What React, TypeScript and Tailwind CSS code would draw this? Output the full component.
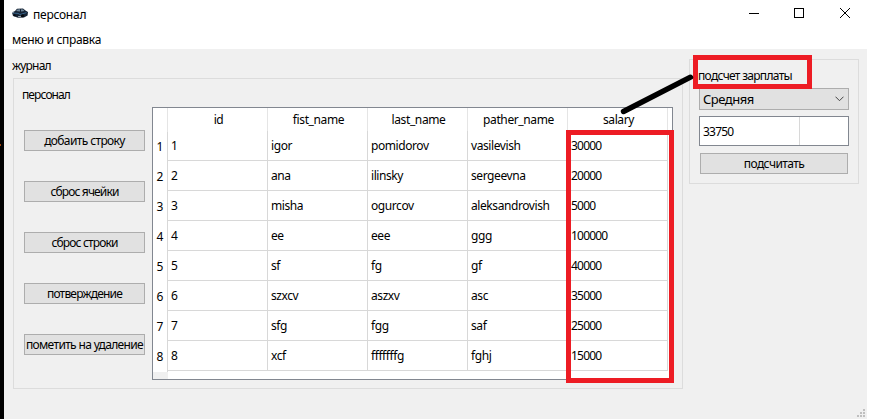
import React from "react";

const columns = ["id", "fist_name", "last_name", "pather_name", "salary"];

const rows = [
  ["1", "igor", "pomidorov", "vasilevish", "30000"],
  ["2", "ana", "ilinsky", "sergeevna", "20000"],
  ["3", "misha", "ogurcov", "aleksandrovish", "5000"],
  ["4", "ee", "eee", "ggg", "100000"],
  ["5", "sf", "fg", "gf", "40000"],
  ["6", "szxcv", "aszxv", "asc", "35000"],
  ["7", "sfg", "fgg", "saf", "25000"],
  ["8", "xcf", "fffffffg", "fghj", "15000"],
];

const actions = [
  { label: "добаить строку", tracking: "tracking-[-0.62px]" },
  { label: "сброс ячейки", tracking: "tracking-[-0.85px]" },
  { label: "сброс строки", tracking: "tracking-[-0.85px]" },
  { label: "потверждение", tracking: "tracking-[-0.8px]" },
  { label: "пометить на удаление", tracking: "tracking-[-0.65px]" },
];

function Button({ label, className }: { label: string; className: string }) {
  return (
    <button
      className={`flex h-[21px] items-center justify-center border border-[#adadad] bg-[#e1e1e1] pt-px whitespace-nowrap ${className}`}
    >
      {label}
    </button>
  );
}

function CarIcon() {
  return (
    <svg width="16" height="12" viewBox="0 0 16 12">
      <path d="M0 4.5 3 3 5 .8 11 .5 13.5 2.5 16 4 15.6 7.5 12 9.4 6 9.8 1 8Z" fill="#152334" />
      <path d="M4 3 5.5 1.4 8 1.3 8 3.4ZM9 1.3 11 1.4 12.6 3 9 3.4Z" fill="#71889c" />
      <path d="M1 5 6 5.4 8 6.5 14.5 4.6" fill="none" stroke="#38648a" />
      <path d="M0 4.5 2 4M6 8.7 9 8.3" stroke="#a2aeb8" />
      <circle cx="10.5" cy="7.8" r="1.5" fill="#05080c" />
      <circle cx="2.7" cy="7.2" r="1" fill="#05080c" />
    </svg>
  );
}

function TitleBar() {
  return (
    <header className="flex h-[27px] justify-between bg-white">
      <div className="flex items-center gap-[5px] pl-2">
        <CarIcon />
        <span className="pt-[2px] tracking-[-0.25px]">персонал</span>
      </div>
      <svg className="mt-[8px] mr-[16px]" width="102" height="11" viewBox="0 0 102 11" fill="none" stroke="#000" shapeRendering="crispEdges">
        <path d="M0 5.5H10M45.5 .5H54.5V9.5H45.5Z" />
        <path d="M91 0 101 10M101 0 91 10" shapeRendering="auto" />
      </svg>
    </header>
  );
}

function StaffTable() {
  return (
    <div className="flex h-[273px] w-[521px] border border-[#828790] bg-white">
      <div className="flex w-[15px] flex-col">
        <div className="h-6 border-r border-[#e5e5e5]" />
        {rows.map((row) => (
          <div key={row[0]} className="flex h-[30px] shrink-0 items-center justify-center border-r border-[#d8d8d8]">
            {row[0]}
          </div>
        ))}
        <div className="grow bg-[#f0f0f0]" />
      </div>
      <div>
        <div className="flex h-[23px]">
          {columns.map((name) => (
            <div key={name} className="flex w-[100px] items-center justify-center border-r border-[#e5e5e5] pt-px pl-[2px] tracking-[-0.38px]">
              {name}
            </div>
          ))}
        </div>
        {rows.map((row) => (
          <div key={row[0]} className="flex h-[30px]">
            {row.map((value, i) => (
              <div
                key={columns[i]}
                className={`flex w-[100px] items-center border-r border-b border-[#d8d8d8] pt-px pl-[3px] ${
                  columns[i] === "salary" ? "tracking-[-0.8px]" : "tracking-[-0.42px]"
                }`}
              >
                {value}
              </div>
            ))}
          </div>
        ))}
      </div>
    </div>
  );
}

function SalaryPanel() {
  return (
    <section className="mt-[10px] ml-[6px] h-[125px] w-[170px] border border-[#dcdcdc] pl-[9px]">
      <div className="-ml-px flex h-7 items-center pt-1 tracking-[-0.7px]">подсчет зарплаты</div>
      <div className="flex h-[22px] w-[150px] items-center justify-between border border-[#adadad] bg-[#e1e1e1] pr-[4px] pl-[3px]">
        <span className="text-[13px] tracking-[-0.5px]">Средняя</span>
        <svg width="9" height="6" viewBox="0 0 9 6" fill="none" stroke="#444">
          <path d="M.5 .7 4.5 4.7 8.5 .7" />
        </svg>
      </div>
      <div className="mt-[6px] flex h-[30px] w-[150px] border border-[#828790] bg-white">
        <div className="flex w-[100px] items-center border-r border-[#d8d8d8] pt-px pl-[3px] tracking-[-0.8px]">33750</div>
      </div>
      <Button label="подсчитать" className="mt-[7px] ml-px w-[148px] tracking-[-0.6px]" />
    </section>
  );
}

function Annotations() {
  return (
    <>
      <div className="absolute top-[55px] left-[693px] h-[34px] w-[119px] border-5 border-[#ed1c24]" />
      <div className="absolute top-[130px] left-[566px] h-[253px] w-[108px] border-5 border-[#ed1c24]" />
      <svg className="absolute top-[70px] left-[615px]" width="85" height="50" viewBox="0 0 85 50">
        <path d="M8.5 41.5 75.5 7.2" stroke="#000" strokeWidth="5.4" strokeLinecap="round" />
      </svg>
    </>
  );
}

export default function App() {
  return (
    <div className="relative flex h-[420px] w-[869px] overflow-hidden bg-white font-['Noto_Sans',sans-serif] text-[12px] leading-4 text-black">
      <div className="h-[419px] w-1 bg-black pt-36">
        <div className="h-[2px] w-px bg-[#a0450c]" />
      </div>
      <div className="flex h-[419px] w-[863px] flex-col">
        <TitleBar />
        <nav className="flex h-[22px] items-center bg-white pt-[3px] pl-2 tracking-[-0.3px]">меню и справка</nav>
        <main className="relative flex grow bg-[#f0f0f0] pl-[9px]">
          <section className="w-[670px]">
            <h1 className="-ml-px flex h-[29px] items-center pt-[5px] tracking-[-0.8px]">журнал</h1>
            <div className="flex h-[311px] border border-[#dcdcdc]">
              <div className="w-[138px] pl-[10px]">
                <h2 className="-ml-[2px] flex h-[51px] items-start pt-[8px] tracking-[-0.9px]">персонал</h2>
                <div className="flex flex-col gap-[30px]">
                  {actions.map((a) => (
                    <Button key={a.label} label={a.label} className={`w-[121px] ${a.tracking}`} />
                  ))}
                </div>
              </div>
              <div className="pt-[28px]">
                <StaffTable />
              </div>
            </div>
          </section>
          <SalaryPanel />
          <svg className="absolute right-[2px] bottom-[2px]" width="8" height="8" fill="#bfbfbf" shapeRendering="crispEdges">
            <path d="M6 0h2v2H6zM3 3h2v2H3zM6 3h2v2H6zM0 6h2v2H0zM3 6h2v2H3zM6 6h2v2H6z" />
          </svg>
        </main>
      </div>
      <Annotations />
    </div>
  );
}
